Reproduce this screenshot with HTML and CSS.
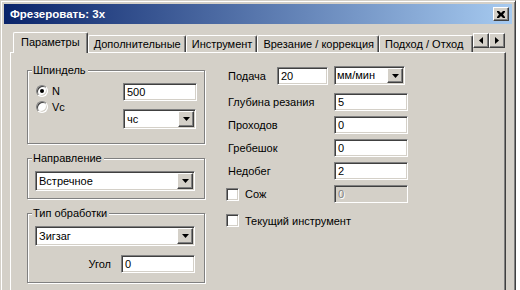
FILE: index.html
```html
<!DOCTYPE html>
<html lang="ru">
<head>
  <meta charset="UTF-8" />
  <title>Фрезеровать: 3х</title>
  <link rel="stylesheet" href="styles.css">
</head>
<body>
  <div class="window">
    <div class="titlebar">
      <span class="title">Фрезеровать: 3х</span>
      <span class="btn close-btn">
        <svg width="8" height="7" viewBox="0 0 8 7"><path d="M0 0h2l2 2 2-2h2v1l-2 2.5 2 2.5v1h-2l-2-2-2 2h-2v-1l2-2.5-2-2.5z" fill="#000"/></svg>
      </span>
    </div>

    <div class="tabs">
      <div class="tab-list">
        <div class="tab active">Параметры</div>
        <div class="tab">Дополнительные</div>
        <div class="tab">Инструмент</div>
        <div class="tab">Врезание / коррекция</div>
        <div class="tab last">Подход / Отход</div>
      </div>
      <div class="tab-scroll">
        <span class="btn scroll-btn"><svg width="4" height="7" viewBox="0 0 4 7"><path d="M4 0v7L0 3.5z" fill="#000"/></svg></span>
        <span class="btn scroll-btn"><svg width="4" height="7" viewBox="0 0 4 7"><path d="M0 0v7l4-3.5z" fill="#000"/></svg></span>
      </div>
    </div>

    <div class="panel">
      <div class="col-left">
        <div class="group">
          <span class="group-title">Шпиндель</span>
          <div class="spindle">
            <div class="radios">
              <label class="radio-row"><span class="radio checked"></span>N</label>
              <label class="radio-row"><span class="radio"></span>Vc</label>
            </div>
            <div class="spindle-fields">
              <div class="edit">500</div>
              <div class="combo">
                <span class="combo-text">чс</span>
                <span class="btn combo-btn"><svg width="7" height="4" viewBox="0 0 7 4"><path d="M0 0h7L3.5 4z" fill="#000"/></svg></span>
              </div>
            </div>
          </div>
        </div>

        <div class="group">
          <span class="group-title">Направление</span>
          <div class="group-body">
            <div class="combo">
              <span class="combo-text">Встречное</span>
              <span class="btn combo-btn"><svg width="7" height="4" viewBox="0 0 7 4"><path d="M0 0h7L3.5 4z" fill="#000"/></svg></span>
            </div>
          </div>
        </div>

        <div class="group">
          <span class="group-title">Тип обработки</span>
          <div class="group-body">
            <div class="combo">
              <span class="combo-text">Зигзаг</span>
              <span class="btn combo-btn"><svg width="7" height="4" viewBox="0 0 7 4"><path d="M0 0h7L3.5 4z" fill="#000"/></svg></span>
            </div>
            <div class="angle-row">
              <span class="angle-label">Угол</span>
              <div class="edit">0</div>
            </div>
          </div>
        </div>
      </div>

      <div class="col-right">
        <div class="feed-row">
          <span class="feed-label">Подача</span>
          <div class="edit feed-edit">20</div>
          <div class="combo feed-combo">
            <span class="combo-text">мм/мин</span>
            <span class="btn combo-btn"><svg width="7" height="4" viewBox="0 0 7 4"><path d="M0 0h7L3.5 4z" fill="#000"/></svg></span>
          </div>
        </div>
        <div class="row"><span class="row-label">Глубина резания</span><div class="edit">5</div></div>
        <div class="row"><span class="row-label">Проходов</span><div class="edit">0</div></div>
        <div class="row"><span class="row-label">Гребешок</span><div class="edit">0</div></div>
        <div class="row"><span class="row-label">Недобег</span><div class="edit">2</div></div>
        <div class="row">
          <label class="row-label check-row"><span class="checkbox"></span>Сож</label>
          <div class="edit disabled">0</div>
        </div>
        <label class="check-row current-tool"><span class="checkbox"></span>Текущий инструмент</label>
      </div>
    </div>
  </div>
</body>
</html>
```

FILE: styles.css
```css
* {
  box-sizing: border-box;
}
html, body {
  margin: 0;
  height: 290px;
  overflow: hidden;
  background: #fff;
}
body {
  font: 11px "Liberation Sans", Arial, sans-serif;
  color: #000;
}

/* window frame */
.window {
  width: 516px;
  height: 300px;
  background: #d4d0c8;
  border: 1px solid;
  border-color: #d4d0c8 #404040 #404040 #d4d0c8;
  box-shadow: inset 1px 1px #fff, inset -1px -1px #808080;
  padding: 3px;
}
.titlebar {
  height: 20px;
  display: flex;
  align-items: center;
  justify-content: space-between;
  padding: 0 3px 0 6px;
  background: linear-gradient(to right, #0a246a, #a6caf0);
}
.title {
  color: #fff;
  font-weight: bold;
  font-size: 11.5px;
}

/* raised 3d button */
.btn {
  display: flex;
  align-items: center;
  justify-content: center;
  background: #d4d0c8;
  border: 1px solid;
  border-color: #fff #404040 #404040 #fff;
  box-shadow: inset -1px -1px #808080;
}
.close-btn {
  width: 16px;
  height: 14px;
}

/* tabs */
.tabs {
  display: flex;
  align-items: flex-end;
  margin-top: 8px;
  height: 20px;
}
.tab-list {
  display: flex;
  align-items: flex-end;
  margin-left: 9px;
  flex: 1;
  min-width: 0;
}
.tab {
  height: 17px;
  padding: 0 4px 0 5px;
  line-height: 16px;
  white-space: nowrap;
  border: 1px solid;
  border-bottom: none;
  border-color: #fff #404040 #404040 #fff;
  border-radius: 2px 2px 0 0;
  box-shadow: inset -1px 0 #808080;
}
.tab.active {
  height: 21px;
  margin-bottom: -1px;
  padding: 0 7px 0 7px;
  line-height: 19px;
  background: #d4d0c8;
  position: relative;
}
.tab.last {
  flex: 1;
  min-width: 0;
  overflow: hidden;
}
.tab-scroll {
  display: flex;
  align-self: flex-start;
  margin: 1px 7px 0 0;
}
.scroll-btn {
  width: 16px;
  height: 15px;
}

/* tab page */
.panel {
  display: flex;
  width: 496px;
  height: 260px;
  margin-left: 6px;
  padding-left: 16px;
  border: 1px solid;
  border-color: #fff #404040 #404040 #fff;
  box-shadow: inset -1px -1px #808080;
}
.col-left {
  width: 178px;
  padding-top: 17px;
  display: flex;
  flex-direction: column;
  gap: 14px;
}
.group {
  border: 1px solid #808080;
  box-shadow: 1px 1px #fff, inset 1px 1px #fff;
}
.group-title {
  display: table;
  margin: -7px 0 0 4px;
  padding: 0 2px 0 1px;
  line-height: 13px;
  background: #d4d0c8;
}
.group-body {
  padding: 6px 9px 7px 7px;
}
.group-body .angle-row {
  margin-bottom: 2px;
}
.spindle {
  display: flex;
  justify-content: space-between;
  padding: 6px 7px 14px 8px;
}
.radios {
  display: flex;
  flex-direction: column;
}
.radio-row {
  display: flex;
  align-items: center;
  gap: 4px;
  height: 16px;
}
.radio {
  width: 12px;
  height: 12px;
  border-radius: 50%;
  background: #fff;
  border: 1px solid;
  border-color: #808080 #fff #fff #808080;
  box-shadow: inset 1px 1px #404040, inset -1px -1px #d4d0c8;
  display: flex;
  align-items: center;
  justify-content: center;
}
.radio.checked::after {
  content: "";
  width: 4px;
  height: 4px;
  border-radius: 50%;
  background: #000;
}
.spindle-fields {
  display: flex;
  flex-direction: column;
  gap: 8px;
  width: 74px;
}
.spindle-fields .combo {
  width: 73px;
}

/* sunken fields */
.edit {
  width: 74px;
  height: 18px;
  padding: 0 3px;
  line-height: 16px;
  background: #fff;
  border: 1px solid;
  border-color: #808080 #fff #fff #808080;
  box-shadow: inset 1px 1px #404040, inset -1px -1px #d4d0c8;
}
.edit.disabled {
  background: #d4d0c8;
  color: #808080;
  text-shadow: 1px 1px #fff;
}
.combo {
  display: flex;
  height: 20px;
  background: #fff;
  border: 1px solid;
  border-color: #808080 #fff #fff #808080;
  box-shadow: inset 1px 1px #404040, inset -1px -1px #d4d0c8;
}
.combo-text {
  flex: 1;
  padding-left: 3px;
  line-height: 18px;
  white-space: nowrap;
  overflow: hidden;
}
.combo-btn {
  width: 16px;
  height: 16px;
  margin: 1px;
}
.angle-row {
  display: flex;
  justify-content: flex-end;
  align-items: center;
  gap: 10px;
  margin-top: 9px;
}

/* right column */
.col-right {
  margin-left: 21px;
  padding-top: 13px;
  display: flex;
  flex-direction: column;
  gap: 5px;
}
.feed-row {
  display: flex;
  align-items: center;
  height: 19px;
  margin-bottom: 3px;
}
.feed-label {
  width: 51px;
  padding-left: 2px;
}
.feed-edit {
  width: 51px;
  margin-right: 6px;
}
.feed-combo {
  width: 71px;
  height: 19px;
}
.feed-combo .combo-btn {
  height: 15px;
}
.feed-combo .combo-text {
  line-height: 17px;
  padding-left: 2px;
}
.row {
  display: flex;
  align-items: center;
}
.row-label {
  width: 108px;
  padding-left: 2px;
}
.check-row {
  display: flex;
  align-items: center;
  gap: 6px;
  padding-left: 0;
}
.checkbox {
  width: 13px;
  height: 13px;
  background: #fff;
  border: 1px solid;
  border-color: #808080 #fff #fff #808080;
  box-shadow: inset 1px 1px #404040, inset -1px -1px #d4d0c8;
}
.current-tool {
  margin-top: 6px;
}
```
